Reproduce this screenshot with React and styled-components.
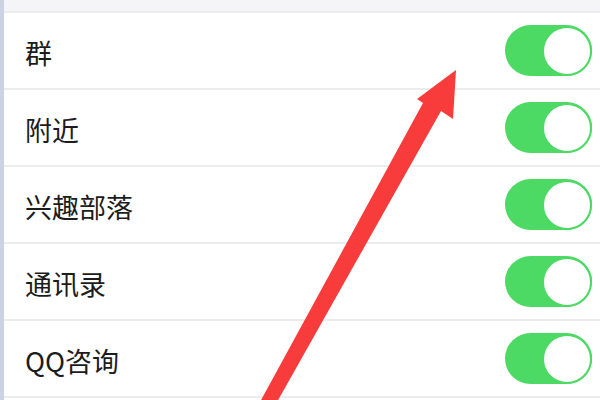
import React from 'react';
import styled, {createGlobalStyle} from 'styled-components';

const GlobalStyle = createGlobalStyle`
    html, body {
        margin: 0;
        padding: 0;
        background: #ffffff;
        overflow: hidden;
    }
`;

const Page = styled.div`
    position: relative;
    width: 600px;
    height: 400px;
    overflow: hidden;
    display: flex;
    background: #ffffff;
`;

const SideStrip = styled.div`
    width: 4px;
    flex-shrink: 0;
    background: #c9d3e3;
`;

const List = styled.div`
    flex: 1;
    display: flex;
    flex-direction: column;
`;

const TopBand = styled.div`
    height: 11px;
    background: #f5f5f7;
    flex-shrink: 0;
`;

const Row = styled.div`
    height: 75px;
    flex-shrink: 0;
    display: flex;
    align-items: center;
    justify-content: space-between;
    padding: 0 8px 0 21px;
    border-top: 2px solid #ececee;
`;

const Label = styled.span`
    font-family: "Noto Sans CJK SC", "Liberation Sans", sans-serif;
    font-size: 27px;
    color: #1c1c1c;
    padding-top: 4px;
`;

const Switch = styled.div`
    width: 87px;
    height: 51px;
    border-radius: 26px;
    background: ${p => (p.on ? '#4cd964' : '#e5e5ea')};
    display: flex;
    justify-content: ${p => (p.on ? 'flex-end' : 'flex-start')};
    align-items: center;
    box-sizing: border-box;
`;

const Knob = styled.div`
    width: 50px;
    height: 50px;
    border-radius: 50%;
    background: #ffffff;
    border: 2px solid #4cd964;
    box-sizing: border-box;
`;

const ArrowLayer = styled.svg`
    position: absolute;
    left: 0;
    top: 0;
    pointer-events: none;
`;

const items = ['群', '附近', '兴趣部落', '通讯录', 'QQ咨询'];

function App() {
    return (
        <Page>
            <GlobalStyle />
            <SideStrip />
            <List>
                <TopBand />
                {items.map(name => (
                    <Row key={name}>
                        <Label>{name}</Label>
                        <Switch on>
                            <Knob />
                        </Switch>
                    </Row>
                ))}
                <Row />
            </List>
            {/* 빨간 화살표 */}
            <ArrowLayer width="600" height="400" viewBox="0 0 600 400">
                <polygon
                    points="456,70 453,119 441,111 277,402 260,402 423,103 417,99"
                    fill="#f83b3b"
                />
            </ArrowLayer>
        </Page>
    );
}

export default App;
